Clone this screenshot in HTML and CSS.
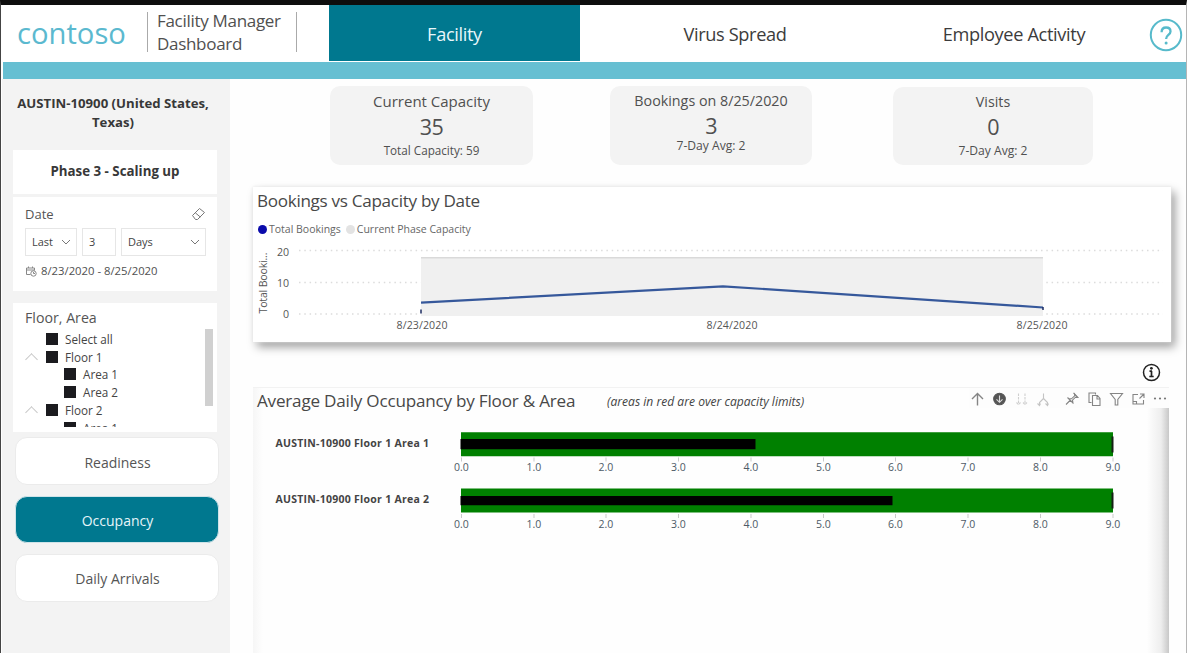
FILE: index.html
```html
<!DOCTYPE html>
<html lang="en">
<head>
<meta charset="utf-8">
<title>Facility Manager Dashboard</title>
<link rel="stylesheet" href="styles.css">
</head>
<body>
<div class="app">
  <header class="header">
    <div class="brand">contoso</div>
    <div class="app-title">Facility Manager<br>Dashboard</div>
    <nav class="tabs">
      <a class="tab tab-active">Facility</a>
      <a class="tab tab-virus">Virus Spread</a>
      <a class="tab tab-employee">Employee Activity</a>
    </nav>
    <svg class="help" width="34" height="34" viewBox="0 0 34 34" fill="none" stroke="#57bacb">
      <circle cx="17" cy="17" r="15.2" stroke-width="2"/>
      <path d="M12.6 14.2c0-3 2-4.700 4.500-4.700s4.400 1.500 4.400 3.900c0 3.600-4.400 3.600-4.400 7.600" stroke-width="2.300"/>
      <circle cx="17.100" cy="25" r="1.500" fill="#57bacb" stroke="none"/>
    </svg>
  </header>
  <div class="strip"></div>
  <div class="body">
    <aside class="sidebar">
      <h1 class="site">AUSTIN-10900 (United States,<br>Texas)</h1>
      <div class="card phase">Phase 3 - Scaling up</div>
      <section class="card date-card">
        <div class="card-head">
          <span class="date-label">Date</span>
          <svg width="15" height="14" viewBox="0 0 15 14" fill="none" stroke="#777" stroke-width="1"><path d="M1.500 8.500 8.500 1.500 13.500 5.500 6.500 12.500H4.500ZM4.300 5.800 9.300 10"/></svg>
        </div>
        <div class="fields">
          <span class="field last">Last<svg width="10" height="6" viewBox="0 0 10 6" fill="none" stroke="#777"><path d="M1 1l4 4 4-4"/></svg></span>
          <span class="field count">3</span>
          <span class="field days">Days<svg width="10" height="6" viewBox="0 0 10 6" fill="none" stroke="#777"><path d="M1 1l4 4 4-4"/></svg></span>
        </div>
        <div class="range">
          <svg width="12" height="11" viewBox="0 0 12 11" fill="none" stroke="#888"><path d="M5.500 8.500H1.500V2h8v2.500M1.500 4h8M3.500.5V2M7.500.5V2"/><circle cx="8.500" cy="7.500" r="2.700"/><path d="M8.500 6v1.500H10"/></svg>
          <span>8/23/2020 - 8/25/2020</span>
        </div>
      </section>
      <section class="card tree-card">
        <div class="tree-title">Floor, Area</div>
        <div class="tree-body">
          <ul class="tree">
            <li><i class="caret"></i><i class="box"></i>Select all</li>
            <li><i class="caret open"></i><i class="box"></i>Floor 1</li>
            <li class="child"><i class="box"></i>Area 1</li>
            <li class="child"><i class="box"></i>Area 2</li>
            <li><i class="caret open"></i><i class="box"></i>Floor 2</li>
            <li class="child"><i class="box"></i>Area 1</li>
          </ul>
          <div class="scroll"></div>
        </div>
      </section>
      <div class="buttons">
        <button class="btn btn-first">Readiness</button>
        <button class="btn btn-active">Occupancy</button>
        <button class="btn">Daily Arrivals</button>
      </div>
    </aside>
    <main class="main">
      <div class="kpis">
        <div class="kpi kpi-capacity"><span class="kpi-name">Current Capacity</span><span class="kpi-value">35</span><span class="kpi-note">Total Capacity: 59</span></div>
        <div class="kpi kpi-bookings"><span class="kpi-name">Bookings on 8/25/2020</span><span class="kpi-value">3</span><span class="kpi-note">7-Day Avg: 2</span></div>
        <div class="kpi kpi-visits"><span class="kpi-name">Visits</span><span class="kpi-value">0</span><span class="kpi-note">7-Day Avg: 2</span></div>
      </div>
      <section class="panel bookings">
        <h2>Bookings vs Capacity by Date</h2>
        <div class="legend">
          <i class="dot dot-total"></i><span>Total Bookings</span>
          <i class="dot dot-cap"></i><span>Current Phase Capacity</span>
        </div>
        <svg class="chart" width="918" height="102" viewBox="253 240 918 102">
          <g stroke="#dcdcdc" stroke-width="1.400" stroke-dasharray="1.500 3.800">
            <path d="M299 250.500H1163M299 282.500H1163M299 314H1163"/>
          </g>
          <rect x="421" y="257" width="622" height="59" fill="#f0f0f0"/>
          <path d="M421 257.800H1043" stroke="#d9d9d9" stroke-width="1.500"/>
          <path d="M421 302.700 723 286.300 1043 307.500" fill="none" stroke="#36589b" stroke-width="2.200"/>
          <path d="M421 309.500v4M1043 307v3" stroke="#1c2c62" stroke-width="1.500"/>
          <g class="tick">
            <text x="289" y="255.500" text-anchor="end">20</text>
            <text x="289" y="286.500" text-anchor="end">10</text>
            <text x="289" y="317.500" text-anchor="end">0</text>
            <text x="396.500" y="328.500" textLength="51">8/23/2020</text>
            <text x="706.500" y="328.500" textLength="51">8/24/2020</text>
            <text x="1016.500" y="328.500" textLength="51">8/25/2020</text>
            <text transform="translate(266.500 313.500) rotate(-90)" textLength="61">Total Booki...</text>
          </g>
        </svg>
      </section>
      <div class="info-row">
        <svg width="19" height="19" viewBox="0 0 19 19" fill="none" stroke="#222"><circle cx="9.500" cy="9.500" r="8" stroke-width="1.500"/><path d="M9.500 8v5.500M7.500 8.200h2.500M7.300 13.500h4.400" stroke-width="1.700"/><circle cx="9.400" cy="5.300" r="1.400" fill="#222" stroke="none"/></svg>
      </div>
      <section class="panel occupancy">
        <div class="occ-head">
          <h2>Average Daily Occupancy by Floor &amp; Area</h2>
          <em>(areas in red are over capacity limits)</em>
          <svg class="tools" width="200" height="20" viewBox="969 388 200 20" fill="none" stroke="#858585" stroke-width="1.100">
            <path d="M977.500 405.500V393.500M972 399l5.500-5.500L983 399" stroke-width="1.400"/>
            <circle cx="999.500" cy="399" r="5.800" fill="#555" stroke="#555"/>
            <path d="M999.500 395.500v6.500M996.500 399.300l3 3 3-3" stroke="#ddd"/>
            <path d="M1018.500 393.500v11M1016.500 402.500l2 2 2-2M1025 393.500v11M1023 402.500l2 2 2-2" stroke="#cfcfcf" stroke-dasharray="2.500 1"/>
            <path d="M1043.500 393.500v5M1043.500 398.500l-4 4v3M1043.500 398.500l4 4v3M1037.500 403.500l2 2 1-2M1045.500 403.500l2 2 1-2" stroke="#c4c4c4"/>
            <path d="M1066 404.500l4.500-4.500M1067.500 397.500l6 6M1068.500 398.500l3 .3 3.200-3-.2-2 3.300 3.500-2.300-.1-3 3 .5 3.200"/>
            <path d="M1073.500 393 1077.500 397.500"/>
            <path d="M1091.500 402.500h-2.500v-9.500h6.500v1.500M1092.500 395.500h5l2.500 3v7h-7.500zM1097 395.500v3.500h3"/>
            <path d="M1110.500 393.500h12l-4.700 6v5.500h-2.600v-5.500z"/>
            <path d="M1138 394.500h-5v9.500h10.500v-4M1140 394h4v4M1144 394l-4.500 4.500M1133.500 401.500h3v2.500"/>
            <g fill="#777" stroke="none"><circle cx="1155" cy="398.500" r="1.100"/><circle cx="1160" cy="398.500" r="1.100"/><circle cx="1165" cy="398.500" r="1.100"/></g>
          </svg>
        </div>
        <svg class="bullets" width="880" height="120" viewBox="253 420 880 120">
          <g class="row-name">
            <text x="275.500" y="447" textLength="153.500">AUSTIN-10900 Floor 1 Area 1</text>
            <text x="275.500" y="503.200" textLength="153.500">AUSTIN-10900 Floor 1 Area 2</text>
          </g>
          <path d="M461 432.300h652v24h-652zM461 488.500h652v24h-652z" fill="#008000"/>
          <path d="M460.500 439h295v10.300h-295zM460.500 496h432v9.300h-432z" fill="#000"/>
          <path d="M1112.500 436.500v16M1112.500 492.500v16" stroke="#152015" stroke-width="2"/>
          <path d="M461.500 457.500v4M534 457.500v4M606 457.500v4M678.500 457.500v4M751 457.500v4M823.500 457.500v4M895.500 457.500v4M968 457.500v4M1040.500 457.500v4M1113 457.500v4M461.500 514v4M534 514v4M606 514v4M678.500 514v4M751 514v4M823.500 514v4M895.500 514v4M968 514v4M1040.500 514v4M1113 514v4" stroke="#c9c9c9"/>
          <g class="scale">
            <text x="461.500" y="471.300">0.0</text><text x="534" y="471.300">1.0</text><text x="606" y="471.300">2.0</text><text x="678.500" y="471.300">3.0</text><text x="751" y="471.300">4.0</text><text x="823.500" y="471.300">5.0</text><text x="895.500" y="471.300">6.0</text><text x="968" y="471.300">7.0</text><text x="1040.500" y="471.300">8.0</text><text x="1113" y="471.300">9.0</text>
            <text x="461.500" y="527.800">0.0</text><text x="534" y="527.800">1.0</text><text x="606" y="527.800">2.0</text><text x="678.500" y="527.800">3.0</text><text x="751" y="527.800">4.0</text><text x="823.500" y="527.800">5.0</text><text x="895.500" y="527.800">6.0</text><text x="968" y="527.800">7.0</text><text x="1040.500" y="527.800">8.0</text><text x="1113" y="527.800">9.0</text>
          </g>
        </svg>
      </section>
    </main>
  </div>
</div>
</body>
</html>
```
FILE: styles.css
```css
* { box-sizing: border-box; }
body { margin: 0; font-family: "Open Sans", "Noto Sans", sans-serif; color: #444; background: #fff; }
h1, h2, ul { margin: 0; padding: 0; }
svg { display: block; flex: none; }

.app { width: 1187px; height: 653px; overflow: hidden; border-top: 5px solid #0e0e0e; border-left: 1px solid #444; border-right: 1px solid #b5b5b5; background: #fefefe; display: flex; flex-direction: column; }

.header { height: 57px; flex: none; display: flex; align-items: flex-start; background: #fff; }
.brand { width: 145px; padding: 8px 0 0 16px; font-size: 29.2px; line-height: 40px; color: #5bb9cf; }
.app-title { width: 150px; height: 40px; margin: 7px 0 0 1px; border: solid #aaa; border-width: 0 1px; padding: 0 0 1px 9px; font-size: 17px; letter-spacing: -.3px; line-height: 23px; color: #505050; white-space: nowrap; display: flex; align-items: center; }
.tabs { display: flex; height: 100%; margin-left: 32px; }
.tab { display: flex; align-items: center; justify-content: center; font-size: 18.2px; letter-spacing: -.35px; color: #3c3c3c; height: 56px; padding-top: 1px; }
.tab-active { width: 251px; background: #00788f; color: #e8f6fa; }
.tab-virus { width: 310px; }
.tab-employee { width: 248px; }
.help { margin: 13px 0 0 11px; }
.strip { height: 17px; flex: none; margin-left: 2px; background: #66bfd2; }

.body { display: flex; flex: 1; min-height: 0; }
.sidebar { width: 228px; flex: none; margin-left: 1px; background: #f3f3f3; padding: 15px 13px 0 11px; display: flex; flex-direction: column; }
.site { height: 56px; font-size: 13.2px; line-height: 19px; font-weight: 700; color: #383838; text-align: center; white-space: nowrap; margin-left: -4px; }
.card { background: #fff; width: 204px; }
.phase { height: 44px; display: flex; align-items: center; justify-content: center; font-size: 13.3px; font-weight: 700; color: #383838; padding-bottom: 2px; }
.date-card { height: 94px; margin-top: 3px; padding: 8px 11px 0 12px; }
.card-head { display: flex; justify-content: space-between; align-items: center; height: 18px; }
.date-label { font-size: 13px; color: #555; }
.fields { display: flex; margin-top: 5px; gap: 5px; }
.field { height: 28px; border: 1px solid #e6e6e6; font-size: 11px; display: flex; align-items: center; justify-content: space-between; padding: 0 5px 1px 6px; color: #444; }
.last { width: 52px; }
.count { width: 34px; }
.days { width: 85px; }
.range { display: flex; align-items: center; gap: 4px; margin-top: 7px; font-size: 11.3px; line-height: 16px; white-space: nowrap; color: #505050; }
.tree-card { height: 129px; margin-top: 12px; padding: 5px 4px 0 12px; }
.tree-title { font-size: 14.2px; line-height: 20px; color: #555; }
.tree-body { display: flex; justify-content: space-between; height: 100px; padding-top: 1px; }
.tree { list-style: none; font-size: 11.7px; color: #444; height: 98px; overflow: hidden; padding-top: 1px; }
.tree li { display: flex; align-items: center; height: 17.8px; white-space: nowrap; }
.tree .child { padding-left: 39px; }
.caret { width: 21px; height: 14px; flex: none; display: flex; align-items: flex-end; }
.open::before { content: ""; width: 8px; height: 8px; margin-left: 2px; border: solid #c8c8c8; border-width: 1px 0 0 1px; transform: rotate(45deg); }
.box { width: 12px; height: 12px; background: #1b1b1f; margin-right: 7px; flex: none; }
.scroll { width: 8px; height: 77px; background: #d0d0d0; flex: none; }
.buttons { display: flex; flex-direction: column; gap: 11px; margin: 5px 0 0 2px; }
.btn { width: 204px; height: 48px; border: 1px solid #ebebeb; border-radius: 12px; background: #fff; font: 14px "Open Sans", sans-serif; color: #555; padding: 1px 0 0 1px; }
.btn-first { padding-top: 3px; }
.btn-active { background: #00788f; border-color: #cfe3e8; color: #e6f5f9; height: 47px; }

.main { flex: 1; min-width: 0; display: flex; flex-direction: column; }
.kpis { display: flex; margin: 7px 0 0 100px; height: 80px; }
.kpi { background: #f3f3f3; border-radius: 10px; height: 79px; display: flex; flex-direction: column; align-items: center; color: #505050; white-space: nowrap; }
.kpi-name { font-size: 14.3px; line-height: 22px; }
.kpi-value { font-size: 21.5px; letter-spacing: -.6px; line-height: 28px; }
.kpi-note { font-size: 12.1px; line-height: 11px; }
.kpi-capacity { width: 203px; padding-top: 4px; }
.kpi-capacity .kpi-name { font-size: 15px; }
.kpi-capacity .kpi-value { line-height: 30px; }
.kpi-capacity .kpi-note { font-size: 11.7px; line-height: 16px; }
.kpi-bookings { width: 202px; margin-left: 77px; padding-top: 4px; }
.kpi-visits { width: 200px; margin: 1px 0 0 81px; height: 78px; padding-top: 4px; }
.kpi-visits .kpi-note { line-height: 20px; }

.panel { margin-left: 23px; background: #fff; flex: none; }
.panel h2 { font-size: 17.1px; letter-spacing: -.3px; font-weight: 400; line-height: 22px; color: #484848; white-space: nowrap; }
.bookings { width: 918px; height: 155px; margin-top: 22px; padding-top: 3px; box-shadow: 0 0 3px #e6e6e6, 4px 5px 9px rgba(0, 0, 0, .38); }
.bookings h2 { padding-left: 4px; }
.legend { display: flex; align-items: center; height: 16px; margin: 9px 0 3px 5px; font-size: 10.5px; color: #666; }
.dot { width: 9px; height: 9px; border-radius: 50%; margin-right: 2px; }
.dot-total { background: #0b0bab; }
.dot-cap { background: #e3e3e3; margin-left: 5px; }
.tick { font-size: 10.6px; fill: #555; }
.info-row { height: 45px; display: flex; justify-content: flex-end; padding: 21px 25px 0 0; flex: none; }
.occupancy { width: 916px; height: 270px; background: linear-gradient(90deg, #f6f6f6, transparent 10px), linear-gradient(270deg, #c8c8c8, #eee 8px, #fefefe 22px); border-top: 1px solid #f2f2f2; }
.occ-head { display: flex; align-items: flex-start; height: 32px; }
.occ-head h2 { width: 350px; padding: 2px 0 0 4px; letter-spacing: -.21px; }
.occ-head em { width: 366px; padding: 4px 0 0 4px; font-size: 12.1px; line-height: 20px; color: #444; white-space: nowrap; }
.tools { background: #fdfdfd; }
.row-name { font-size: 10.5px; font-weight: 700; fill: #444; }
.scale { font-size: 10.5px; fill: #4d5a66; text-anchor: middle; }
```
